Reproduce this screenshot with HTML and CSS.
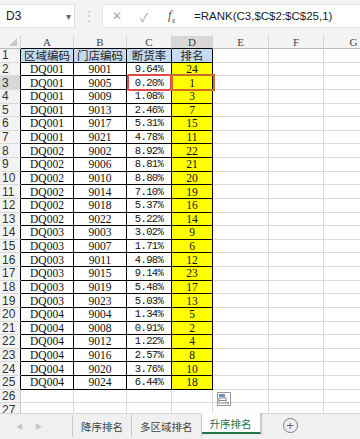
FILE: index.html
```html
<!DOCTYPE html>
<html lang="zh">
<head>
    <meta charset="UTF-8">
    <link rel="stylesheet" href="styles.css">
</head>
<body>
    <!-- formula bar -->
    <div class="formula-bar">
        <div class="name-box"><span>D3</span><span class="drop">&#9662;</span></div>
        <div class="grip">&#8942;</div>
        <div class="formula-box">
            <span class="fb-icon cancel">&#10005;</span>
            <span class="fb-icon enter">&#10003;</span>
            <span class="fb-icon fx">f<sub>x</sub></span>
            <span class="formula">=RANK(C3,$C$2:$C$25,1)</span>
        </div>
    </div>

    <!-- worksheet -->
    <div class="sheet">
        <table class="grid">
            <colgroup>
                <col class="w-rn"><col class="w-a"><col class="w-b"><col class="w-c"><col class="w-d"><col class="w-e"><col class="w-f"><col class="w-g">
            </colgroup>
            <tr class="col-head">
                <th class="corner"><span class="tri"></span></th><th class="top">A</th><th class="top">B</th><th class="top">C</th><th class="top sel">D</th><th>E</th><th>F</th><th>G</th>
            </tr>
            <tr class="data"><th>1</th><td class="b head">区域编码</td><td class="b head">门店编码</td><td class="b head">断货率</td><td class="b head">排名</td><td></td><td></td><td></td></tr>
            <tr class="data"><th>2</th><td class="b">DQ001</td><td class="b">9001</td><td class="b pct">9.64%</td><td class="b rk">24</td><td></td><td></td><td></td></tr>
            <tr class="data"><th class="sel">3</th><td class="b">DQ001</td><td class="b">9005</td><td class="b pct">0.20%</td><td class="b rk">1</td><td></td><td></td><td></td></tr>
            <tr class="data"><th>4</th><td class="b">DQ001</td><td class="b">9009</td><td class="b pct">1.08%</td><td class="b rk">3</td><td></td><td></td><td></td></tr>
            <tr class="data"><th>5</th><td class="b">DQ001</td><td class="b">9013</td><td class="b pct">2.46%</td><td class="b rk">7</td><td></td><td></td><td></td></tr>
            <tr class="data"><th>6</th><td class="b">DQ001</td><td class="b">9017</td><td class="b pct">5.31%</td><td class="b rk">15</td><td></td><td></td><td></td></tr>
            <tr class="data"><th>7</th><td class="b">DQ001</td><td class="b">9021</td><td class="b pct">4.78%</td><td class="b rk">11</td><td></td><td></td><td></td></tr>
            <tr class="data"><th>8</th><td class="b">DQ002</td><td class="b">9002</td><td class="b pct">8.92%</td><td class="b rk">22</td><td></td><td></td><td></td></tr>
            <tr class="data"><th>9</th><td class="b">DQ002</td><td class="b">9006</td><td class="b pct">8.81%</td><td class="b rk">21</td><td></td><td></td><td></td></tr>
            <tr class="data"><th>10</th><td class="b">DQ002</td><td class="b">9010</td><td class="b pct">8.80%</td><td class="b rk">20</td><td></td><td></td><td></td></tr>
            <tr class="data"><th>11</th><td class="b">DQ002</td><td class="b">9014</td><td class="b pct">7.10%</td><td class="b rk">19</td><td></td><td></td><td></td></tr>
            <tr class="data"><th>12</th><td class="b">DQ002</td><td class="b">9018</td><td class="b pct">5.37%</td><td class="b rk">16</td><td></td><td></td><td></td></tr>
            <tr class="data"><th>13</th><td class="b">DQ002</td><td class="b">9022</td><td class="b pct">5.22%</td><td class="b rk">14</td><td></td><td></td><td></td></tr>
            <tr class="data"><th>14</th><td class="b">DQ003</td><td class="b">9003</td><td class="b pct">3.02%</td><td class="b rk">9</td><td></td><td></td><td></td></tr>
            <tr class="data"><th>15</th><td class="b">DQ003</td><td class="b">9007</td><td class="b pct">1.71%</td><td class="b rk">6</td><td></td><td></td><td></td></tr>
            <tr class="data"><th>16</th><td class="b">DQ003</td><td class="b">9011</td><td class="b pct">4.98%</td><td class="b rk">12</td><td></td><td></td><td></td></tr>
            <tr class="data"><th>17</th><td class="b">DQ003</td><td class="b">9015</td><td class="b pct">9.14%</td><td class="b rk">23</td><td></td><td></td><td></td></tr>
            <tr class="data"><th>18</th><td class="b">DQ003</td><td class="b">9019</td><td class="b pct">5.48%</td><td class="b rk">17</td><td></td><td></td><td></td></tr>
            <tr class="data"><th>19</th><td class="b">DQ003</td><td class="b">9023</td><td class="b pct">5.03%</td><td class="b rk">13</td><td></td><td></td><td></td></tr>
            <tr class="data"><th>20</th><td class="b">DQ004</td><td class="b">9004</td><td class="b pct">1.34%</td><td class="b rk">5</td><td></td><td></td><td></td></tr>
            <tr class="data"><th>21</th><td class="b">DQ004</td><td class="b">9008</td><td class="b pct">0.91%</td><td class="b rk">2</td><td></td><td></td><td></td></tr>
            <tr class="data"><th>22</th><td class="b">DQ004</td><td class="b">9012</td><td class="b pct">1.22%</td><td class="b rk">4</td><td></td><td></td><td></td></tr>
            <tr class="data"><th>23</th><td class="b">DQ004</td><td class="b">9016</td><td class="b pct">2.57%</td><td class="b rk">8</td><td></td><td></td><td></td></tr>
            <tr class="data"><th>24</th><td class="b">DQ004</td><td class="b">9020</td><td class="b pct">3.76%</td><td class="b rk">10</td><td></td><td></td><td></td></tr>
            <tr class="data"><th>25</th><td class="b">DQ004</td><td class="b">9024</td><td class="b pct">6.44%</td><td class="b rk">18</td><td></td><td></td><td></td></tr>
            <tr><th>26</th><td></td><td></td><td></td><td></td><td></td><td></td><td></td></tr>
            <tr><th>27</th><td></td><td></td><td></td><td></td><td></td><td></td><td></td></tr>
        </table>

        <!-- marks drawn over the cells -->
        <div class="mark-red"></div>
        <div class="mark-active"></div>
        <div class="paste-icon">
            <svg width="14" height="14" viewBox="0 0 14 14">
                <rect x="0.5" y="0.5" width="13" height="13" fill="#fff" stroke="#9a9a9a"/>
                <rect x="2" y="2" width="6" height="3" fill="#6d8fc2"/>
                <rect x="2" y="6" width="7" height="5" fill="none" stroke="#8a8a8a"/>
                <line x1="2" y1="8.5" x2="9" y2="8.5" stroke="#8a8a8a"/>
                <path d="M9.5 10.5 L12.5 10.5 L11 12.3 Z" fill="#555"/>
            </svg>
        </div>
    </div>

    <!-- sheet tabs -->
    <div class="tabs">
        <div class="tab-nav"><span>&#9664;</span><span>&#9654;</span></div>
        <div class="tab">降序排名</div>
        <div class="tab">多区域排名</div>
        <div class="tab active">升序排名</div>
        <div class="add">+</div>
    </div>
</body>
</html>
```

FILE: styles.css
```css
body {
    margin: 0;
    width: 360px;
    height: 439px;
    overflow: hidden;
    background-color: #fff;
    font-family: 'Liberation Sans', 'Noto Sans CJK SC', sans-serif;
    color: #333;
}

/* formula bar */
.formula-bar {
    height: 36px;
    box-sizing: border-box;
    padding-top: 4px;
    background-color: #f3f3f3;
    display: flex;
    align-items: flex-start;
}

.name-box {
    width: 75px;
    height: 24px;
    box-sizing: border-box;
    padding: 0 3px 0 6px;
    background-color: #fff;
    border: 1px solid #e2e2e2;
    border-left: none;
    display: flex;
    align-items: center;
    justify-content: space-between;
    font-size: 12px;
    color: #222;
}

.drop {
    font-size: 10px;
    color: #666;
}

.grip {
    width: 27px;
    height: 24px;
    line-height: 24px;
    text-align: center;
    color: #c4c4c4;
    font-size: 12px;
}

.formula-box {
    flex: 1;
    height: 24px;
    box-sizing: border-box;
    background-color: #fff;
    border: 1px solid #e2e2e2;
    border-right: none;
    display: flex;
    align-items: center;
    padding-left: 9px;
}

.fb-icon {
    width: 28px;
    font-size: 12px;
    color: #a8a8a8;
}

.fx {
    font-family: 'Liberation Serif', serif;
    font-style: italic;
    font-size: 13px;
    color: #555;
    width: 26px;
}

.fx sub {
    font-size: 8px;
}

.formula {
    font-size: 11.5px;
    color: #222;
}

/* worksheet grid */
.sheet {
    position: relative;
    height: 377px;
    overflow: hidden;
}

.grid {
    border-spacing: 0;
    table-layout: fixed;
    width: 384px;
}

.w-rn { width: 21px; }
.w-a { width: 53px; }
.w-b { width: 53px; }
.w-c { width: 45px; }
.w-d { width: 41px; }
.w-e { width: 56px; }
.w-f { width: 55px; }
.w-g { width: 60px; }

.grid tr {
    height: 13.64px;
}

.grid th,
.grid td {
    padding: 0;
    border-right: 1px solid #dadada;
    border-bottom: 1px solid #dadada;
    text-align: center;
    white-space: nowrap;
    line-height: 12px;
}

.grid td {
    font-family: 'Liberation Serif', serif;
    font-size: 11.5px;
    color: #111;
}

.grid th {
    background-color: #f3f3f3;
    font-weight: normal;
    font-size: 12px;
    color: #333;
    border-right-color: #c8c8c8;
    text-align: left;
    padding-left: 2px;
}

.col-head {
    height: 13px !important;
}

.col-head th {
    font-family: 'Liberation Serif', serif;
    font-size: 11px;
    color: #444;
    text-align: center;
    padding-left: 0;
    border-bottom-color: #bcbcbc;
    border-right-color: #d4d4d4;
}

.col-head th.top {
    border-bottom-color: #000;
}

.corner {
    position: relative;
}

.tri {
    position: absolute;
    right: 3px;
    bottom: 2px;
    border-left: 8px solid transparent;
    border-bottom: 8px solid #c8c8c8;
}

.grid th.sel {
    background-color: #d8d8d8;
}

.data th {
    border-right-color: #000;
}

.grid td.b {
    border-right-color: #000;
    border-bottom-color: #000;
}

.grid td.head {
    background-color: #c5d9f1;
    font-family: 'Noto Sans CJK SC', sans-serif;
    font-size: 11.5px;
    line-height: 12px;
    color: #222;
}

.grid td.pct {
    font-family: 'Liberation Mono', monospace;
    font-size: 10.5px;
    letter-spacing: -0.6px;
}

.grid td.rk {
    background-color: #ffff00;
}

.mark-red {
    position: absolute;
    left: 127px;
    top: 38px;
    width: 45px;
    height: 17px;
    box-sizing: border-box;
    border: 2px solid #de4b4b;
    border-radius: 2px;
}

.mark-active {
    position: absolute;
    left: 171px;
    top: 38px;
    width: 44px;
    height: 17px;
    box-sizing: border-box;
    border: 2px solid #cf6a2c;
}

.paste-icon {
    position: absolute;
    left: 217px;
    top: 356px;
    width: 14px;
    height: 14px;
}

/* sheet tabs */
.tabs {
    height: 26px;
    box-sizing: border-box;
    background-color: #f0f0f0;
    border-top: 1px solid #d6d6d6;
    display: flex;
    align-items: flex-start;
    font-family: 'Noto Sans CJK SC', sans-serif;
    font-size: 10.5px;
    color: #444;
}

.tab-nav {
    width: 73px;
    height: 22px;
    margin-top: 1px;
    display: flex;
    align-items: center;
    gap: 12px;
    padding-left: 16px;
    box-sizing: border-box;
    font-size: 7px;
    color: #c4c4c4;
    border-right: 1px solid #c8c8c8;
}

.tab {
    height: 22px;
    margin-top: 1px;
    padding: 0 8px;
    display: flex;
    align-items: center;
    border-right: 1px solid #c8c8c8;
}

.tab.active {
    height: 18px;
    margin-top: -1px;
    padding-top: 1px;
    background-color: #fff;
    color: #217346;
    border-bottom: 2px solid #217346;
    box-shadow: 1px 0 1px rgba(0, 0, 0, 0.15);
}

.add {
    width: 13px;
    height: 13px;
    margin: 4px 0 0 22px;
    border: 1px solid #777;
    border-radius: 50%;
    font-family: 'Liberation Sans', sans-serif;
    font-size: 13px;
    line-height: 13px;
    text-align: center;
    color: #666;
}
```
